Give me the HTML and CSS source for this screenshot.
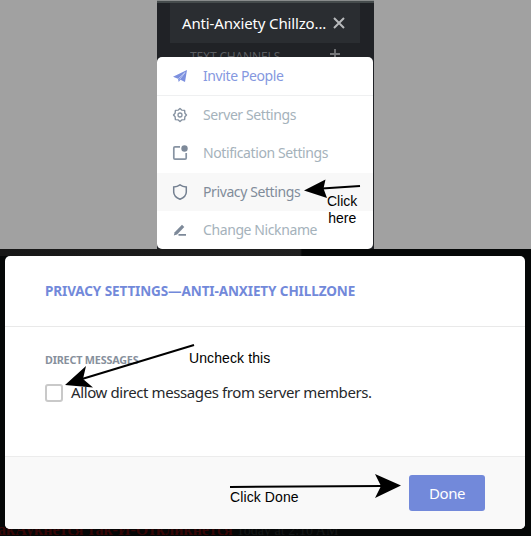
FILE: index.html
```
<!DOCTYPE html>
<html lang="en">
<head>
<meta charset="utf-8">
<title>Privacy settings guide</title>
<link rel="stylesheet" href="styles.css">
</head>
<body>
<main class="guide">
  <section class="top">
    <div class="sidebar">
      <header class="server"><span class="server-name">Anti-Anxiety Chillzo...</span>
        <svg class="close" width="12" height="12" viewBox="0 0 12 12"><path d="M1 1l10 10M11 1L1 11" stroke="#b7b9bb" stroke-width="2"/></svg>
      </header>
      <div class="channels"><span>TEXT CHANNELS</span>
        <svg width="10" height="10" viewBox="0 0 10 10"><path d="M5 0v10M0 5h10" stroke="#75777a" stroke-width="1.8"/></svg>
      </div>
      <nav class="menu">
        <div class="item invite"><svg width="16" height="16" viewBox="0 0 16 16"><path d="M1 8.700L15 2l-2 12-4.500-2.300L6.700 14 6 10.700z" fill="#7c90df"/><path d="M6.200 10.800L13 4.500 7.700 11.500" fill="none" stroke="#dfe5fa" stroke-width=".6"/></svg><span>Invite People</span></div>
        <div class="item"><svg width="16" height="16" viewBox="0 0 16 16" fill="none" stroke="#8793a2"><path stroke-width="1.400" stroke-linejoin="round" d="M8 1.500L9.700 3.100L12.600 3.400L12.900 6.300L14.500 8L12.900 9.700L12.600 12.600L9.700 12.900L8 14.500L6.300 12.900L3.400 12.600L3.100 9.700L1.500 8L3.100 6.300L3.400 3.400L6.300 3.100z"/><circle cx="8" cy="8" r="2" stroke-width="1.300"/></svg><span>Server Settings</span></div>
        <div class="item"><svg width="16" height="16" viewBox="0 0 16 16"><path d="M8 1.800H3a1.200 1.200 0 0 0-1.200 1.200v10A1.200 1.200 0 0 0 3 14.200h10a1.200 1.200 0 0 0 1.200-1.200V8" fill="none" stroke="#8793a2" stroke-width="1.700"/><circle cx="12.500" cy="3.500" r="3.200" fill="#7d8999"/></svg><span>Notification Settings</span></div>
        <div class="item active"><svg width="16" height="16" viewBox="0 0 16 16"><path d="M8 .8c2 1.400 4 2 6.300 2.200v5c0 3.200-2.300 5.600-6.300 7.300-4-1.700-6.300-4.100-6.300-7.300V3C4 2.800 6 2.200 8 .8z" fill="none" stroke="#748091" stroke-width="1.500"/></svg><span>Privacy Settings</span></div>
        <div class="item"><svg width="16" height="16" viewBox="0 0 16 16"><path d="M1.800 13.500l.9-3.300L10 2.800l2.300 2.300-7.200 7.500z" fill="#7d8999"/><path d="M6.500 12.900h7.500" stroke="#7d8999" stroke-width="1.700"/></svg><span>Change Nickname</span></div>
      </nav>
    </div>
  </section>
  <section class="bottom">
    <div class="backdrop-text"><span class="red">акАукнется так-И-Откликнется</span> <span>Today at 2:10 AM</span></div>
    <div class="modal">
      <header class="modal-head"><h1>PRIVACY SETTINGS—ANTI-ANXIETY CHILLZONE</h1></header>
      <div class="modal-body">
        <h2>DIRECT MESSAGES</h2>
        <div class="check"><span class="box"></span><span class="check-label">Allow direct messages from server members.</span></div>
      </div>
      <footer class="modal-foot"><button class="done">Done</button></footer>
    </div>
  </section>
  <svg class="arrows" width="531" height="536" viewBox="0 0 531 536">
    <g stroke="#000" stroke-width="2"><path d="M360 186L322 188.500"/><path d="M194 345L82 379"/><path d="M230 487L382 486"/></g>
    <path d="M304 190.500L325.500 179.500 323.500 188.500 327 198z"/>
    <path d="M65 385L86 366 83 379 93 387.500z"/>
    <path d="M401 485.500L375 474 381 486 375 498z"/>
  </svg>
  <p class="note n1">Click<br>here</p>
  <p class="note n2">Uncheck this</p>
  <p class="note n3">Click Done</p>
</main>
</body>
</html>
```
FILE: styles.css
```
* { box-sizing: border-box; }
body { margin: 0; font-family: "Noto Sans", "Open Sans", sans-serif; }
.guide { position: relative; width: 531px; height: 536px; overflow: hidden; background: #050707; }
.top { height: 249px; padding-left: 157px; background: #a1a1a1; }
.sidebar { width: 217px; height: 249px; padding-top: 2px; background: #202226; border-top: 1px solid #888b8b; box-shadow: inset 0 2px #454b4c; }
.server { height: 40px; margin: 0 14px 0 13px; padding: 0 15px 0 12px; display: flex; align-items: center; justify-content: space-between; background: #2a2d31; color: #fff; font-size: 15px; white-space: nowrap; }
.server-name { letter-spacing: -.15px; }
.close { flex: none; }
.channels { height: 14px; padding: 5px 34px 0 33px; display: flex; justify-content: space-between; color: #5a5d61; font-size: 12px; line-height: 18px; overflow: hidden; letter-spacing: -.15px; }
.channels svg { margin-top: 1px; flex: none; }
.menu { width: 216px; height: 192px; background: #fff; border-radius: 5px; overflow: hidden; }
.item { height: 38.300px; display: flex; align-items: center; padding-left: 15px; gap: 15px; color: #a5b2bb; font-size: 14px; white-space: nowrap; }
.invite { height: 39px; border-bottom: 1px solid #eff0f1; color: #8598e0; }
.active { background: #f8f8f8; color: #818c9a; }
.item svg { flex: none; }
.item span { letter-spacing: -.4px; padding-bottom: 1px; }
.bottom { height: 287px; padding: 7px 6px 0 5px; position: relative; background: linear-gradient(90deg, #171717 0, #202020 300px, #050707 302px) 0 0 / 100% 7px no-repeat, #050707; }
.backdrop-text { position: absolute; left: -2px; top: 273px; color: #151818; font: 14px/16px "Liberation Serif", serif; white-space: nowrap; }
.red { color: #360606; font-weight: bold; font-size: 16px; }
.modal { position: relative; height: 273px; background: #fff; border-radius: 5px; overflow: hidden; display: flex; flex-direction: column; }
.modal-head { height: 71px; border-bottom: 1px solid #e9e9e9; padding: 25px 40px 0; }
h1, h2, p { margin: 0; }
h1 { font-size: 13.500px; line-height: 20px; color: #7289da; letter-spacing: -.1px; white-space: nowrap; }
.modal-body { height: 129px; padding: 26px 40px 0; }
h2 { font-size: 10.800px; line-height: 14px; color: #87909c; letter-spacing: -.2px; }
.check { display: flex; align-items: center; gap: 8px; margin-top: 15px; height: 22px; }
.box { width: 18px; height: 18px; border: 2px solid #c9c9c9; border-radius: 3px; }
.check-label { font-size: 15px; color: #26282b; letter-spacing: -.4px; padding-bottom: 2px; white-space: nowrap; }
.modal-foot { height: 73px; background: #f9f9f9; border-top: 1px solid #ececec; display: flex; align-items: center; justify-content: flex-end; padding-right: 40px; }
.done { width: 76px; height: 36px; padding: 0 0 1px; border: 0; border-radius: 3px; background: #7289da; color: #fff; font: 15px "Noto Sans", sans-serif; letter-spacing: -.4px; }
.arrows { position: absolute; left: 0; top: 0; }
.note { position: absolute; font: 14px/17px "Liberation Sans", sans-serif; color: #000; white-space: nowrap; }
.n1 { left: 327px; top: 193px; text-align: center; }
.n2 { left: 189px; top: 350px; letter-spacing: .1px; }
.n3 { left: 230px; top: 489px; letter-spacing: .1px; }
```
